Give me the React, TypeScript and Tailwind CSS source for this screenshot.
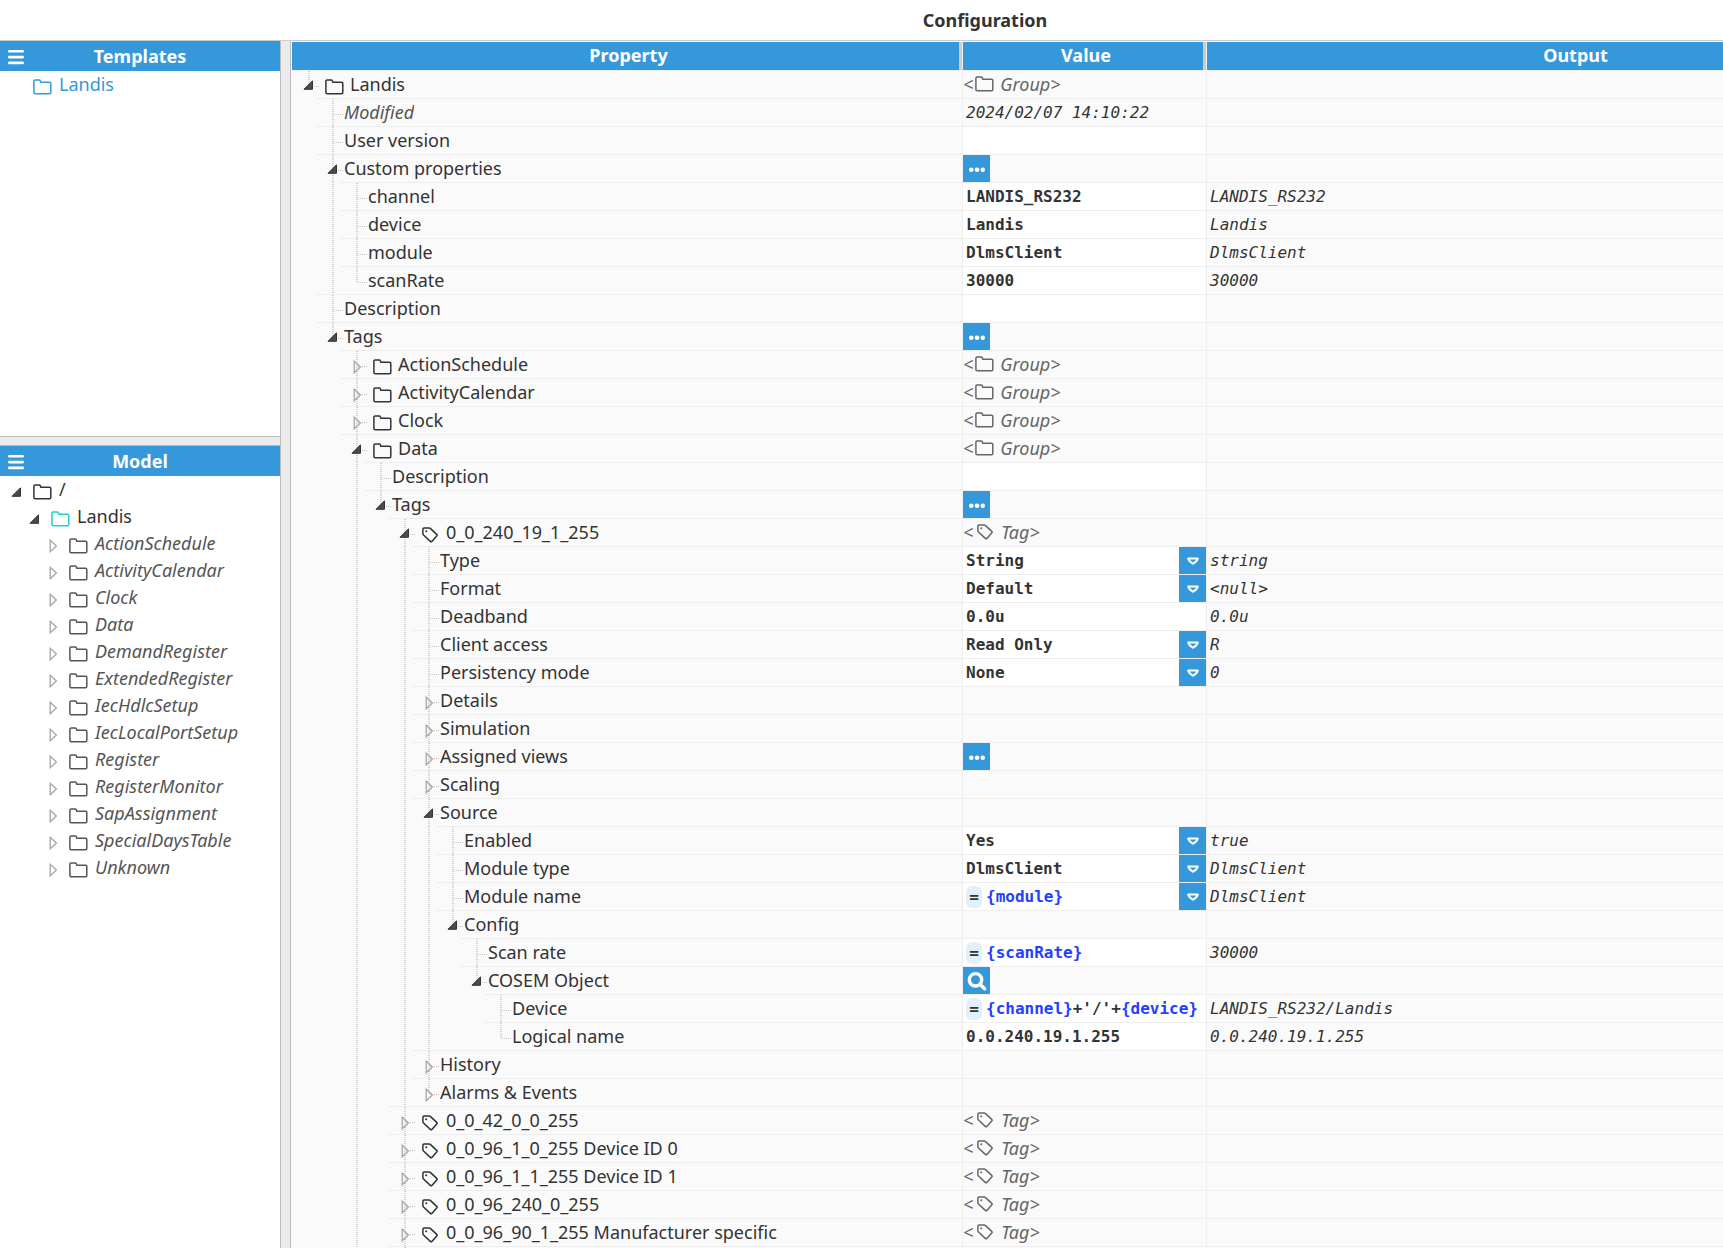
import React from 'react';

interface Row {
  level: number;
  label: string;
  icon?: 'folder' | 'tag';
  toggle?: 'open' | 'closed';
  muted?: boolean;
  kind?: 'group' | 'tag' | 'text' | 'input' | 'select' | 'more' | 'search';
  value?: string;
  formula?: string[];
  output?: string;
}

const rows: Row[] = [
  { level: 0, label: 'Landis', icon: 'folder', toggle: 'open', kind: 'group' },
  { level: 1, label: 'Modified', muted: true, kind: 'text', value: '2024/02/07 14:10:22' },
  { level: 1, label: 'User version', kind: 'input', value: '' },
  { level: 1, label: 'Custom properties', toggle: 'open', kind: 'more' },
  { level: 2, label: 'channel', kind: 'input', value: 'LANDIS_RS232', output: 'LANDIS_RS232' },
  { level: 2, label: 'device', kind: 'input', value: 'Landis', output: 'Landis' },
  { level: 2, label: 'module', kind: 'input', value: 'DlmsClient', output: 'DlmsClient' },
  { level: 2, label: 'scanRate', kind: 'input', value: '30000', output: '30000' },
  { level: 1, label: 'Description', kind: 'input', value: '' },
  { level: 1, label: 'Tags', toggle: 'open', kind: 'more' },
  { level: 2, label: 'ActionSchedule', icon: 'folder', toggle: 'closed', kind: 'group' },
  { level: 2, label: 'ActivityCalendar', icon: 'folder', toggle: 'closed', kind: 'group' },
  { level: 2, label: 'Clock', icon: 'folder', toggle: 'closed', kind: 'group' },
  { level: 2, label: 'Data', icon: 'folder', toggle: 'open', kind: 'group' },
  { level: 3, label: 'Description', kind: 'input', value: '' },
  { level: 3, label: 'Tags', toggle: 'open', kind: 'more' },
  { level: 4, label: '0_0_240_19_1_255', icon: 'tag', toggle: 'open', kind: 'tag' },
  { level: 5, label: 'Type', kind: 'select', value: 'String', output: 'string' },
  { level: 5, label: 'Format', kind: 'select', value: 'Default', output: '<null>' },
  { level: 5, label: 'Deadband', kind: 'input', value: '0.0u', output: '0.0u' },
  { level: 5, label: 'Client access', kind: 'select', value: 'Read Only', output: 'R' },
  { level: 5, label: 'Persistency mode', kind: 'select', value: 'None', output: '0' },
  { level: 5, label: 'Details', toggle: 'closed' },
  { level: 5, label: 'Simulation', toggle: 'closed' },
  { level: 5, label: 'Assigned views', toggle: 'closed', kind: 'more' },
  { level: 5, label: 'Scaling', toggle: 'closed' },
  { level: 5, label: 'Source', toggle: 'open' },
  { level: 6, label: 'Enabled', kind: 'select', value: 'Yes', output: 'true' },
  { level: 6, label: 'Module type', kind: 'select', value: 'DlmsClient', output: 'DlmsClient' },
  { level: 6, label: 'Module name', kind: 'select', formula: ['{module}'], output: 'DlmsClient' },
  { level: 6, label: 'Config', toggle: 'open' },
  { level: 7, label: 'Scan rate', kind: 'input', formula: ['{scanRate}'], output: '30000' },
  { level: 7, label: 'COSEM Object', toggle: 'open', kind: 'search' },
  { level: 8, label: 'Device', kind: 'input', formula: ['{channel}', "+'/'+", '{device}'], output: 'LANDIS_RS232/Landis' },
  { level: 8, label: 'Logical name', kind: 'input', value: '0.0.240.19.1.255', output: '0.0.240.19.1.255' },
  { level: 5, label: 'History', toggle: 'closed' },
  { level: 5, label: 'Alarms & Events', toggle: 'closed' },
  { level: 4, label: '0_0_42_0_0_255', icon: 'tag', toggle: 'closed', kind: 'tag' },
  { level: 4, label: '0_0_96_1_0_255 Device ID 0', icon: 'tag', toggle: 'closed', kind: 'tag' },
  { level: 4, label: '0_0_96_1_1_255 Device ID 1', icon: 'tag', toggle: 'closed', kind: 'tag' },
  { level: 4, label: '0_0_96_240_0_255', icon: 'tag', toggle: 'closed', kind: 'tag' },
  { level: 4, label: '0_0_96_90_1_255 Manufacturer specific', icon: 'tag', toggle: 'closed', kind: 'tag' },
  // blank tail rows, they keep the guides running to the bottom edge
  { level: 4, label: '' },
  { level: 2, label: '' },
];

const modelItems = [
  'ActionSchedule',
  'ActivityCalendar',
  'Clock',
  'Data',
  'DemandRegister',
  'ExtendedRegister',
  'IecHdlcSetup',
  'IecLocalPortSetup',
  'Register',
  'RegisterMonitor',
  'SapAssignment',
  'SpecialDaysTable',
  'Unknown',
];

// does a guide line for `level` run on below row `index`?
const continues = (index: number, level: number) => {
  for (let i = index + 1; i < rows.length; i++) {
    if (rows[i].level === level) return true;
    if (rows[i].level < level) return false;
  }
  return false;
};

const mono = "font-['DejaVu_Sans_Mono',monospace] text-base";
const dotsDown = 'w-0.5 bg-[repeating-linear-gradient(to_bottom,#d0d0d0_0_1px,transparent_1px_2px)]';
const dotsAcross = 'h-px bg-[repeating-linear-gradient(to_right,#c4c4c4_0_1px,transparent_1px_2px)]';

const FolderIcon = ({ className = '' }: { className?: string }) => (
  <svg className={`h-4 w-[19px] shrink-0 ${className}`} viewBox="0 0 19 16" fill="none" stroke="currentColor" strokeWidth="1.5" strokeLinejoin="round">
    <path d="M0.9 13.6V2.2Q0.9 1 2.1 1H6.2Q7 1 7.3 1.8L7.8 3.2H16.6Q17.8 3.2 17.8 4.4V13.6Q17.8 14.8 16.6 14.8H2.1Q0.9 14.8 0.9 13.6Z" />
  </svg>
);

const TagIcon = ({ className = '' }: { className?: string }) => (
  <svg className={`h-4 w-4 shrink-0 ${className}`} viewBox="0 0 16 16" fill="none" stroke="currentColor" strokeWidth="1.5" strokeLinejoin="round">
    <path d="M0.9 2.1Q0.9 0.9 2.1 0.9H7.2Q7.8 0.9 8.3 1.4L14.7 7.4Q15.5 8.2 14.7 9L9.9 14.4Q9.1 15.2 8.3 14.4L1.5 8Q0.9 7.4 0.9 6.8Z" />
    <circle cx="4.2" cy="4.2" r="1" fill="currentColor" stroke="none" />
  </svg>
);

const Toggle = ({ state }: { state: 'open' | 'closed' }) => (
  <button type="button" aria-label={state === 'open' ? 'Collapse' : 'Expand'} className="flex h-3.5 w-3 items-center justify-center">
    {state === 'open' ? (
      <svg className="h-2.5 w-3" viewBox="0 0 12 10">
        <path d="M9.5 0.8V9.3H1Z" fill="#4a4a4a" stroke="#333333" />
      </svg>
    ) : (
      <svg className="h-3.5 w-3" viewBox="0 0 12 14" fill="none">
        <path d="M3.2 1.2L9.4 7L3.2 12.8Z" stroke="#a6a6a6" strokeWidth="1.3" />
      </svg>
    )}
  </button>
);

const PanelHeader = ({ title }: { title: string }) => (
  <div className="grid h-[30px] shrink-0 grid-cols-[16px_1fr_16px] items-center bg-[#3598db] px-2 text-white">
    <button type="button" aria-label={`${title} menu`} className="pt-0.5">
      <svg className="h-4 w-4" viewBox="0 0 16 16" stroke="#fff" strokeWidth="2.6" strokeLinecap="round">
        <path d="M1.3 2.3H14.7M1.3 8.1H14.7M1.3 13.9H14.7" />
      </svg>
    </button>
    <h2 className="text-center text-lg leading-[30px] font-bold">{title}</h2>
  </div>
);

const TreeCell = ({ row, index }: { row: Row; index: number }) => (
  <div className="flex h-7">
    {Array.from({ length: row.level }, (_, l) => (
      <span key={l} className="flex w-6 shrink-0 pl-4">
        {continues(index, l) && <span className={dotsDown}></span>}
      </span>
    ))}
    <div className="flex min-w-0 grow border-t border-[#eeeeee]">
      <div className="relative h-[27px] w-7 shrink-0">
        <span className={`absolute top-0 left-4 ${dotsDown} ${continues(index, row.level) ? 'h-[27px]' : 'h-4'}`}></span>
        {row.label && <span className={`absolute top-[15px] left-[18px] w-2.5 ${dotsAcross}`}></span>}
        {row.toggle && (
          <span className={`absolute left-[11px] ${row.toggle === 'open' ? 'top-[7px]' : 'top-[9px]'}`}>
            <Toggle state={row.toggle} />
          </span>
        )}
      </div>
      {row.icon === 'folder' && <FolderIcon className="mt-2 ml-[5px] text-[#333333]" />}
      {row.icon === 'tag' && <TagIcon className="mt-2 mr-0.5 ml-1.5 text-[#333333]" />}
      <span className={`truncate text-lg leading-[26px] ${row.icon ? 'pl-1.5' : ''} ${row.muted ? 'text-[#555555] italic' : 'text-[#333333]'}`}>
        {row.label}
      </span>
    </div>
  </div>
);

const KindTag = ({ icon, text }: { icon: React.ReactNode; text: string }) => (
  <span className="flex items-center text-lg leading-[26px] text-[#666666] italic">
    &lt;{icon}
    <span className="pl-1.5">{text}&gt;</span>
  </span>
);

const DropIcon = () => (
  <span className="flex h-[27px] w-[27px] items-center justify-center bg-[#3598db]">
    <svg className="h-3 w-3" viewBox="0 0 12 12" fill="none" stroke="#fff" strokeWidth="2" strokeLinejoin="round">
      <path d="M1.2 3.4H10.8Q10.6 5 8.9 6.6L6 8.8L3.1 6.6Q1.4 5 1.2 3.4Z" />
    </svg>
  </span>
);

const ValueCell = ({ row }: { row: Row }) => {
  if (row.kind === 'group') return <KindTag icon={<FolderIcon className="ml-0.5" />} text="Group" />;
  if (row.kind === 'tag') return <KindTag icon={<TagIcon className="mr-0.5 ml-1" />} text="Tag" />;
  if (row.kind === 'text') return <span className={`block h-[27px] pl-[3px] leading-7 text-[#333333] italic ${mono}`}>{row.value}</span>;
  if (row.kind === 'more' || row.kind === 'search') {
    return (
      <button type="button" aria-label={`${row.label} details`} className="flex h-[27px] w-[27px] items-center justify-center bg-[#3598db]">
        {row.kind === 'more' ? (
          <svg className="h-4 w-4" viewBox="0 0 16 16" fill="#fff">
            <circle cx="2.3" cy="8.7" r="2.3" />
            <circle cx="8" cy="8.7" r="2.3" />
            <circle cx="13.7" cy="8.7" r="2.3" />
          </svg>
        ) : (
          <svg className="h-5 w-5" viewBox="0 0 20 20" fill="none" stroke="#fff" strokeWidth="3.4" strokeLinecap="round">
            <circle cx="8.5" cy="8.8" r="6.2" />
            <path d="M13.5 13.8L17.6 17.8" />
          </svg>
        )}
      </button>
    );
  }
  if (row.formula) {
    return (
      <div className="flex h-[27px] bg-white">
        <div className={`flex grow items-center pl-[3px] leading-[26px] font-bold whitespace-pre text-[#333333] ${mono}`}>
          <span className="mr-1 flex h-[22px] w-4 items-center justify-center rounded-md bg-[#e1f0fa]">=</span>
          {row.formula.map((part) => (
            <span key={part} className={part.startsWith('{') ? 'text-[#2340ff]' : ''}>{part}</span>
          ))}
        </div>
        {row.kind === 'select' && (
          <button type="button" aria-label={`${row.label} options`}>
            <DropIcon />
          </button>
        )}
      </div>
    );
  }
  if (row.kind === 'select') {
    return (
      <div className="relative h-[27px] bg-white">
        <select aria-label={row.label} className={`h-[27px] w-full appearance-none bg-white pl-[3px] leading-[26px] font-bold text-[#333333] ${mono}`}>
          <option>{row.value}</option>
        </select>
        <span className="pointer-events-none absolute top-0 right-0">
          <DropIcon />
        </span>
      </div>
    );
  }
  if (row.kind === 'input') {
    return <input aria-label={row.label} defaultValue={row.value} className={`block h-[27px] w-full bg-white pl-[3px] leading-[26px] font-bold text-[#333333] ${mono}`} />;
  }
  return null;
};

const PropertyTable = () => (
  <table className="w-full table-fixed border-separate border-spacing-0">
    <colgroup>
      <col className="w-[671px]" />
      <col className="w-[244px]" />
      <col />
    </colgroup>
    <thead>
      <tr className="h-7 text-lg leading-[26px] text-white">
        {['Property', 'Value', 'Output'].map((name) => (
          <th key={name} scope="col" className="border-r border-[#eeeeee] p-0 font-bold">
            <div className="h-7 border-r-[3px] border-[#cccccc] bg-[#3598db] pl-1.5">{name}</div>
          </th>
        ))}
      </tr>
    </thead>
    <tbody>
      {rows.map((row, i) => (
        <tr key={i} className="h-7">
          <td className="border-r border-[#eeeeee] p-0 align-top">
            <TreeCell row={row} index={i} />
          </td>
          <td className="border-t border-r border-[#eeeeee] p-0 align-top">
            <ValueCell row={row} />
          </td>
          <td className="border-t border-[#eeeeee] p-0 pl-[3px] align-top">
            <span className={`block h-[27px] leading-7 text-[#333333] italic ${mono}`}>{row.output}</span>
          </td>
        </tr>
      ))}
    </tbody>
  </table>
);

const Sidebar = () => (
  <aside className="flex w-[281px] shrink-0 flex-col border-r border-[#bbbbbb] bg-white">
    <section className="flex h-[395px] shrink-0 flex-col">
      <PanelHeader title="Templates" />
      <ul>
        <li>
          <a href="#landis" className="flex h-[27px] items-center pl-[33px] text-lg leading-[27px] text-[#3598db]">
            <FolderIcon className="mt-1" />
            <span className="pl-[7px]">Landis</span>
          </a>
        </li>
      </ul>
    </section>
    <div className="h-2.5 shrink-0 border-y border-[#bbbbbb] bg-[#ebebeb]"></div>
    <section className="flex flex-col">
      <PanelHeader title="Model" />
      <ul className="text-lg leading-[27px] text-[#333333]">
        <li className="flex h-[27px] items-center pl-[11px]">
          <span className="mt-1"><Toggle state="open" /></span>
          <FolderIcon className="mt-1 ml-2.5" />
          <span className="pl-[7px]">/</span>
        </li>
        <li className="flex h-[27px] items-center pl-[29px]">
          <span className="mt-1"><Toggle state="open" /></span>
          <FolderIcon className="mt-1 ml-2.5 text-[#1fd1cb]" />
          <span className="pl-[7px]">Landis</span>
        </li>
        {modelItems.map((name) => (
          <li key={name} className="flex h-[27px] items-center pl-[47px]">
            <span className="mt-1"><Toggle state="closed" /></span>
            <FolderIcon className="mt-1 ml-2.5 text-[#555555]" />
            <span className="pl-[7px] text-[#555555] italic">{name}</span>
          </li>
        ))}
      </ul>
    </section>
  </aside>
);

const App: React.FC = () => {
  return (
    <div className="h-screen overflow-hidden bg-white font-['Noto_Sans',sans-serif]">
      <div className="flex h-full min-w-[1970px] flex-col">
        <header className="h-10 shrink-0 text-center">
          <h1 className="text-lg leading-10 font-bold text-[#333333]">Configuration</h1>
        </header>
        <div className="flex min-h-0 grow border-t border-[#cccccc]">
          <Sidebar />
          <div className="w-2.5 shrink-0 border-r border-[#bbbbbb] bg-[#ebebeb]"></div>
          <main className="grow overflow-hidden bg-[#fafafa] pt-px pr-7 pl-px">
            <PropertyTable />
          </main>
        </div>
      </div>
    </div>
  );
};

export default App;
